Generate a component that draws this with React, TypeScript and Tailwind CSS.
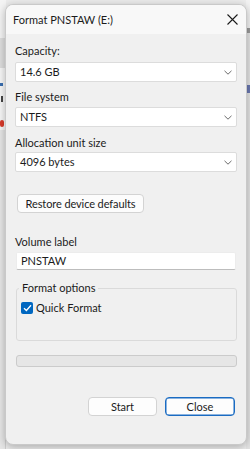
import React from "react";

function Chevron() {
  return (
    <svg width="8" height="5" viewBox="0 0 8 5" className="shrink-0">
      <path d="M0.5 0.8 L4 4.2 L7.5 0.8" fill="none" stroke="#6b6b6b" strokeWidth="1" />
    </svg>
  );
}

function Select({ value, mt }: { value: string; mt: string }) {
  return (
    <div
      className={`${mt} h-[20px] w-full bg-white border border-[#dcdcdc] rounded-[2px] flex items-center justify-between pl-[4px] pr-[4px]`}
    >
      <span className="leading-[16px] whitespace-nowrap">{value}</span>
      <Chevron />
    </div>
  );
}

export default function App() {
  return (
    <div
      className="relative w-[250px] h-[449px] overflow-hidden bg-[#ececec] text-[#1b1b1b]"
      style={{ fontFamily: 'Lato, "Noto Sans", sans-serif' }}
    >
      {/* background window fragments */}
      <div className="absolute left-0 top-0 w-[6px] h-[449px] flex flex-col">
        <div className="h-[38px] bg-[#f4f4f4]" />
        <div className="h-[30px] bg-[#dedede]" />
        <div className="h-[50px] bg-[#f7f7f7] relative">
          <div className="absolute left-[0px] top-[15px] w-[3px] h-[3px] bg-[#3a6fb0]" />
          <div className="absolute left-[1px] top-[28px] w-[2px] h-[6px] bg-[#444]" />
        </div>
        <div className="h-[12px] bg-[#f7f7f7] relative">
          <div className="absolute left-[0px] top-[2px] w-[4px] h-[7px] rounded-full bg-[#d93a2a]" />
        </div>
        <div className="flex-1 bg-[#e6e6e6] border-r border-[#cfcfcf]" />
      </div>
      <div className="absolute right-0 top-0 w-[4px] h-[449px] flex flex-col bg-[#e4e4e4]">
        <div className="h-[28px] bg-[#f2f2f2]" />
        <div className="h-[5px] bg-[#9a9a9a]" />
        <div className="h-[52px]" />
        <div className="h-[8px] bg-[#6a78b0]" />
      </div>

      {/* dialog window */}
      <div className="absolute left-[5px] top-[4px] w-[242px] h-[441px] rounded-[8px] border border-[#c9c9c9] bg-[#f0f0f0] shadow-[0_2px_8px_rgba(0,0,0,0.28)] overflow-hidden flex flex-col text-[11px] whitespace-nowrap">
        {/* title bar */}
        <div className="h-[29px] shrink-0 bg-[#f8f8f8] flex items-center justify-between pl-[7px] pr-[8px]">
          <span className="leading-[16px] text-[11px]">Format PNSTAW (E:)</span>
          <svg width="11" height="11" viewBox="0 0 11 11">
            <path d="M0.5 0.5 L10.5 10.5 M10.5 0.5 L0.5 10.5" stroke="#1b1b1b" strokeWidth="1.1" />
          </svg>
        </div>

        {/* body */}
        <div className="flex flex-col px-[9px] pb-[10px] flex-1">
          <div className="mt-[9px] leading-[16px]">Capacity:</div>
          <Select value="14.6 GB" mt="mt-[3px]" />

          <div className="mt-[7px] leading-[16px]">File system</div>
          <Select value="NTFS" mt="mt-[2px]" />

          <div className="mt-[8px] leading-[16px]">Allocation unit size</div>
          <Select value="4096 bytes" mt="mt-[1px]" />

          <div className="mt-[22px] ml-[2px] w-[127px] h-[19px] bg-[#fcfcfc] border border-[#d3d3d3] rounded-[4px] flex items-center justify-center">
            <span className="leading-[16px] tracking-[-0.1px]">Restore device defaults</span>
          </div>

          <div className="mt-[21px] leading-[16px]">Volume label</div>
          <div className="mt-[2px] ml-[1px] mr-[1px] h-[18px] bg-white border border-[#ececec] border-b-[#bdbdbd] rounded-[2px] flex items-center pl-[4px]">
            <span className="leading-[16px]">PNSTAW</span>
          </div>

          <fieldset className="mt-[10px] ml-[1px] border border-[#dadada] rounded-[3px] pl-[2px] pb-[24px]">
            <legend className="px-[3px] leading-[16px]">Format options</legend>
            <div className="mt-[4px] ml-[2px] flex items-center gap-[3px]">
              <div className="w-[12px] h-[12px] rounded-[2px] bg-[#0067c0] flex items-center justify-center">
                <svg width="9" height="8" viewBox="0 0 9 8">
                  <path d="M1 4.2 L3.4 6.5 L8 1.3" fill="none" stroke="white" strokeWidth="1.3" />
                </svg>
              </div>
              <span className="leading-[16px]">Quick Format</span>
            </div>
          </fieldset>

          <div className="mt-[14px] ml-[1px] h-[12px] rounded-[3px] border border-[#cbcbcb] bg-[#e6e6e6]" />

          <div className="mt-[30px] flex justify-end gap-[8px] mr-[2px]">
            <div className="w-[69px] h-[19px] bg-[#fdfdfd] border border-[#d3d3d3] rounded-[4px] flex items-center justify-center">
              <span className="leading-[16px]">Start</span>
            </div>
            <div className="w-[70px] h-[19px] bg-[#fdfdfd] border border-[#1a6bc2] rounded-[4px] flex items-center justify-center shadow-[inset_0_0_0_0.5px_#1a6bc2]">
              <span className="leading-[16px]">Close</span>
            </div>
          </div>
        </div>
      </div>
    </div>
  );
}
